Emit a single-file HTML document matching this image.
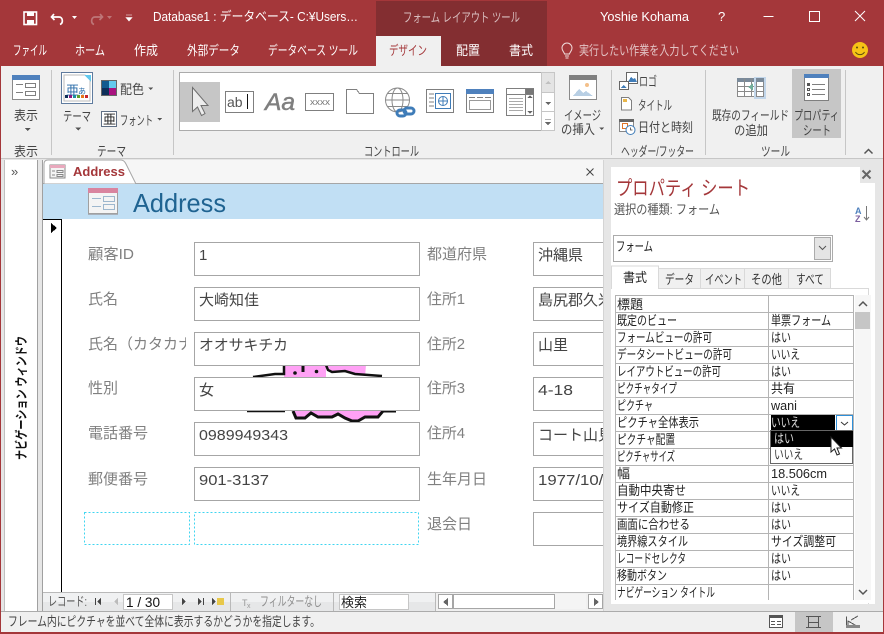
<!DOCTYPE html>
<html lang="ja"><head><meta charset="utf-8"><title>Access</title>
<style>
html,body{margin:0;padding:0;background:#fff}
body{width:884px;height:634px;overflow:hidden}
svg{display:block}
text{font-family:"Liberation Sans","Noto Sans CJK JP",sans-serif;font-size:13px;fill:#444}
.w{fill:#fff}.l{font-size:15px;fill:#808080}.f{font-size:15px;fill:#444}
.g{font-size:13px;fill:#222}
.box{fill:#fff;stroke:#a6a6a6;stroke-width:1}
.ic{fill:none;stroke:#7f7f7f;stroke-width:1}
.ln{stroke:#b4b4b4;stroke-width:1}
</style></head><body>
<svg width="884" height="634" viewBox="0 0 884 634" xmlns="http://www.w3.org/2000/svg" shape-rendering="crispEdges">
<!-- base -->
<rect width="884" height="634" fill="#E6E6E6"/>
<rect width="884" height="66" fill="#A4373A"/>
<rect x="376" y="1" width="171" height="35" fill="#832E31"/>
<rect x="441" y="36" width="106" height="30" fill="#832E31"/>
<rect x="376" y="36" width="65" height="30" fill="#F0F0F0"/>
<rect x="1" y="66" width="882" height="93" fill="#F0F0F0"/>
<rect x="1" y="158" width="882" height="1" fill="#C6C6C6"/>
<rect x="0" y="0" width="1" height="634" fill="#A4373A"/>
<rect x="883" y="0" width="1" height="634" fill="#A4373A"/>
<!-- title bar -->
<g shape-rendering="auto">
<rect x="24" y="12" width="12.500" height="12.500" fill="none" stroke="#fff" stroke-width="1.600"/>
<rect x="27" y="12" width="7" height="4" fill="#fff"/><rect x="27" y="20" width="7" height="4.500" fill="#fff"/>
<path d="M54 14l-2.500 3 3 3M52 17h7c4 0 4.500 6 1 7.500" fill="none" stroke="#fff" stroke-width="1.700"/>
<path d="M72 16l5 0-2.500 3z" fill="#fff"/>
<path d="M100 14l2.500 3-3 3M102 17h-7c-4 0-4.500 6-1 7.500" fill="none" stroke="#BE7678" stroke-width="1.700"/>
<path d="M107 16l5 0-2.500 3z" fill="#BE7678"/>
<path d="M126 15h6M126 17.500l6 0-3 3.500z" fill="#fff" stroke="#fff" stroke-width=".6"/>
<path d="M763.500 16.500h10M809.500 11.500h10v10h-10zM855 11l10 10M865 11l-10 10" fill="none" stroke="#fff" stroke-width="1"/>
</g>
<text class="w" x="153" y="21" textLength="205" lengthAdjust="spacingAndGlyphs">Database1 : データベース- C:¥Users…</text>
<text x="403" y="22" textLength="117" lengthAdjust="spacingAndGlyphs" style="fill:#D8BDBE">フォーム レイアウト ツール</text>
<text class="w" x="600" y="21" textLength="89" lengthAdjust="spacingAndGlyphs">Yoshie Kohama</text>
<text class="w" x="718" y="21">?</text>
<!-- tabs -->
<text class="w" x="13" y="55" textLength="34" lengthAdjust="spacingAndGlyphs">ファイル</text>
<text class="w" x="75" y="55" textLength="30" lengthAdjust="spacingAndGlyphs">ホーム</text>
<text class="w" x="134" y="55" textLength="24" lengthAdjust="spacingAndGlyphs">作成</text>
<text class="w" x="187" y="55" textLength="53" lengthAdjust="spacingAndGlyphs">外部データ</text>
<text class="w" x="268" y="55" textLength="90" lengthAdjust="spacingAndGlyphs">データベース ツール</text>
<text x="389" y="55" textLength="38" lengthAdjust="spacingAndGlyphs" style="fill:#A4373A">デザイン</text>
<text class="w" x="456" y="55" textLength="24" lengthAdjust="spacingAndGlyphs">配置</text>
<text class="w" x="509" y="55" textLength="24" lengthAdjust="spacingAndGlyphs">書式</text>
<text x="579" y="55" textLength="160" lengthAdjust="spacingAndGlyphs" style="fill:#E3C4C5">実行したい作業を入力してください</text>
<g shape-rendering="auto">
<path d="M564.500 54c-.3-2-2.500-3-2.500-6a5 5 0 0 1 10 0c0 3-2.200 4-2.500 6zM565 56h4M565.500 58h3" fill="none" stroke="#F0DCDC" stroke-width="1"/>
<circle cx="860" cy="50" r="8" fill="#F6C416"/>
<circle cx="857" cy="47.500" r="1" fill="#5a4a10"/><circle cx="863" cy="47.500" r="1" fill="#5a4a10"/>
<path d="M855.500 52c2 3.500 7 3.500 9 0" fill="none" stroke="#5a4a10" stroke-width="1"/>
</g>
<!-- ribbon seps -->
<g fill="#C6C6C6"><rect x="51" y="70" width="1" height="85"/><rect x="173" y="70" width="1" height="85"/><rect x="611" y="70" width="1" height="85"/><rect x="705" y="70" width="1" height="85"/><rect x="845" y="70" width="1" height="85"/></g>
<!-- 表示 -->
<rect x="12.500" y="75.500" width="27" height="24" fill="#fff" stroke="#8a8a8a"/>
<rect x="12" y="75" width="28" height="5" fill="#4F81BD"/>
<path d="M16 84.500h7M25.500 83.500h10v4h-10zM16 92.500h7M25.500 91.500h10v4h-10z" class="ic"/>
<text x="14" y="120" textLength="24" lengthAdjust="spacingAndGlyphs">表示</text>
<path d="M24.500 128h6l-3 3z" fill="#555"/>
<text x="14" y="156" textLength="24" lengthAdjust="spacingAndGlyphs">表示</text>
<!-- テーマ -->
<rect x="61.500" y="72.500" width="31" height="31" fill="#fff" stroke="#5F7B9E"/>
<path d="M64 75h21l5 5v21H64z" fill="#fff" stroke="#bbb"/>
<path d="M84 75h7v7z" fill="#63C9EE"/>
<text x="66" y="95" style="font-size:13px;fill:#2A6CA8">亜</text><text x="78" y="94" style="font-size:8px;fill:#2A6CA8">あ</text>
<g><rect x="65" y="95" width="3" height="3" fill="#0E2F5A"/><rect x="69" y="95" width="3" height="3" fill="#8A1A80"/><rect x="73" y="95" width="3" height="3" fill="#1B8FA0"/><rect x="77" y="95" width="3" height="3" fill="#5E9E2E"/><rect x="81" y="95" width="3" height="3" fill="#E8761C"/><rect x="85" y="95" width="3" height="3" fill="#C8262B"/></g>
<text x="63" y="121" textLength="28" lengthAdjust="spacingAndGlyphs">テーマ</text>
<path d="M75 127.500h6l-3 3z" fill="#555"/>
<rect x="101" y="80" width="16" height="16" fill="#666"/>
<rect x="102" y="81" width="7" height="7" fill="#125A8F"/><rect x="109" y="81" width="7" height="7" fill="#63C9EE"/><rect x="102" y="88" width="7" height="7" fill="#0E2F5A"/><rect x="109" y="88" width="7" height="7" fill="#A9127F"/>
<text x="120" y="94" textLength="24" lengthAdjust="spacingAndGlyphs">配色</text>
<path d="M148 87.500h5l-2.500 2.500z" fill="#555"/>
<rect x="101.500" y="111.500" width="15" height="15" fill="#fff" stroke="#5F6F85"/>
<text x="103" y="124" style="font-size:13px;fill:#222">亜</text>
<text x="120" y="125" textLength="33" lengthAdjust="spacingAndGlyphs">フォント</text>
<path d="M157 118h5l-2.500 2.500z" fill="#555"/>
<text x="97" y="156" textLength="29" lengthAdjust="spacingAndGlyphs">テーマ</text>
<!-- gallery -->
<rect x="179.500" y="72.500" width="362" height="58" fill="#fff" stroke="#ABABAB"/>
<rect x="541.500" y="72.500" width="13" height="20" fill="#E4E4E4" stroke="#C6C6C6"/>
<rect x="541.500" y="92.500" width="13" height="19" fill="#fff" stroke="#C6C6C6"/>
<rect x="541.500" y="111.500" width="13" height="19" fill="#fff" stroke="#C6C6C6"/>
<path d="M545 84l3-3 3 3z" fill="#C0C0C0"/><path d="M545 102h6l-3 3z" fill="#666"/><path d="M545 119.500h6M545 122h6l-3 3z" fill="#666" stroke="#666" stroke-width=".5"/>
<rect x="180" y="82" width="40" height="40" fill="#C6C6C6"/>
<path d="M192.500 87.500v24l5-4.500 4 8.500 3.500-2-4-8h7z" fill="#EDEDED" stroke="#6f6f6f" shape-rendering="auto"/>
<rect x="225.500" y="91.500" width="28" height="21" fill="#fff" stroke="#7f7f7f"/>
<text x="227" y="107" style="font-size:14px;fill:#555">ab</text><rect x="247" y="94" width="1" height="15" fill="#111"/>
<text x="265" y="110" style="font-size:24px;font-style:italic;fill:#7f7f7f;stroke:#7f7f7f;stroke-width:.5" textLength="30" lengthAdjust="spacingAndGlyphs">Aa</text>
<rect x="305.500" y="93.500" width="28" height="17" fill="#fff" stroke="#7f7f7f"/>
<text x="310" y="105" style="font-size:9px;fill:#777" textLength="20" lengthAdjust="spacingAndGlyphs">xxxx</text>
<path d="M346.500 113.500v-24h10l3 4h14v20z" fill="#fff" stroke="#7f7f7f"/>
<g shape-rendering="auto" fill="none" stroke="#8a8a8a" stroke-width="1"><circle cx="397.500" cy="100" r="12"/><ellipse cx="397.500" cy="100" rx="5.500" ry="12"/><path d="M385.500 100h24M387.500 93.500h20M387.500 106.500h20"/></g>
<g shape-rendering="auto" fill="none" stroke="#3F7CB8" stroke-width="3"><rect x="397" y="110" width="9" height="6" rx="3"/><rect x="404" y="108" width="10" height="6" rx="3"/></g>
<rect x="426.500" y="89.500" width="27" height="23" fill="#fff" stroke="#7f7f7f"/>
<path d="M429 94h5M429 98h5M429 102h5M429 106h5" class="ic"/><rect x="435.500" y="93.500" width="15" height="15" fill="#fff" stroke="#3F7CB8"/>
<g shape-rendering="auto" fill="none" stroke="#3F7CB8"><circle cx="443" cy="101" r="4.500"/><path d="M438.500 101h9M443 96.500v9"/></g>
<rect x="466.500" y="89.500" width="27" height="23" fill="#fff" stroke="#7f7f7f"/><rect x="466" y="89" width="28" height="5" fill="#4F81BD"/>
<path d="M469 97.500h6M477 97.500h6M485 97.500h6" class="ic"/><rect x="469.500" y="100.500" width="21" height="9" fill="#fff" stroke="#9a9a9a"/>
<rect x="506.500" y="88.500" width="27" height="27" fill="#fff" stroke="#7f7f7f"/>
<path d="M506.500 94.500h27M525.500 88.500v27" class="ic"/><rect x="526" y="89" width="8" height="5" fill="#777"/>
<path d="M509 98.500h14M509 101.500h14M509 104.500h14M509 107.500h14M509 110.500h14" stroke="#aaa" fill="none"/>
<path d="M527.500 98l2.500-3 2.500 3zM527.500 111h5l-2.500 3z" fill="#666"/>
<text x="364" y="156" textLength="55" lengthAdjust="spacingAndGlyphs">コントロール</text>
<!-- image -->
<rect x="569.500" y="75.500" width="27" height="24" fill="#fff" stroke="#8a8a8a"/><rect x="569" y="75" width="28" height="5" fill="#808080"/>
<path d="M573 96l6-7 4 4 3-2 7 5z" fill="#B8CFE4"/><circle cx="587" cy="85" r="2" fill="#F3C08A" shape-rendering="auto"/>
<text x="564" y="120" textLength="37" lengthAdjust="spacingAndGlyphs">イメージ</text>
<text x="561" y="134" textLength="34" lengthAdjust="spacingAndGlyphs">の挿入</text>
<path d="M599 127.500h5l-2.500 2.500z" fill="#555"/>
<!-- header/footer -->
<rect x="626.500" y="72.500" width="11" height="11" fill="#fff" stroke="#666"/><path d="M628 82l3-5 2 2 2-1 2 4z" fill="#3F7CB8"/>
<rect x="619.500" y="81.500" width="9" height="8" fill="#fff" stroke="#666"/><path d="M621 88l2.500-3 3 3z" fill="#3F7CB8"/>
<text x="639" y="86" textLength="18" lengthAdjust="spacingAndGlyphs">ロゴ</text>
<path d="M621.500 97.500h7l3 3v9.500h-10z" fill="#fff" stroke="#7f7f7f"/><rect x="623" y="99" width="4" height="3" fill="#E8B64A"/>
<text x="638" y="110" textLength="34" lengthAdjust="spacingAndGlyphs">タイトル</text>
<rect x="619.500" y="119.500" width="14" height="12" fill="#fff" stroke="#888"/><rect x="619" y="119" width="15" height="3" fill="#666"/><rect x="622.500" y="123.500" width="5" height="5" fill="none" stroke="#E0762C"/>
<g shape-rendering="auto"><circle cx="630.500" cy="130" r="4.500" fill="#fff" stroke="#3F7CB8"/><path d="M630.500 127.500v2.500h2" fill="none" stroke="#444" stroke-width=".8"/></g>
<text x="638" y="132" textLength="55" lengthAdjust="spacingAndGlyphs">日付と時刻</text>
<text x="621" y="156" textLength="73" lengthAdjust="spacingAndGlyphs">ヘッダー/フッター</text>
<!-- tools -->
<rect x="737.500" y="78.500" width="21" height="18" fill="#fff" stroke="#8a8a8a"/><rect x="737" y="78" width="22" height="4" fill="#7a8a9a"/>
<path d="M737.500 86.500h21M737.500 91.500h21M744.500 78.500v18M751.500 78.500v18" stroke="#8a8a8a" fill="none"/>
<rect x="754" y="77" width="12" height="22" fill="#C2D6EA"/><rect x="756.500" y="78.500" width="7" height="18" fill="#fff" stroke="#8a8a8a"/><rect x="756" y="78" width="8" height="4" fill="#7a8a9a"/>
<path d="M756.500 86.500h7M756.500 91.500h7" stroke="#8a8a8a" fill="none"/>
<path d="M753 83.500v7l-5-3.500z" fill="#6FAE9A"/>
<text x="712" y="120" textLength="77" lengthAdjust="spacingAndGlyphs">既存のフィールド</text>
<text x="734" y="135" textLength="34" lengthAdjust="spacingAndGlyphs">の追加</text>
<rect x="792" y="69" width="49" height="69" fill="#C6C6C6"/>
<rect x="804.500" y="74.500" width="24" height="26" fill="#fff" stroke="#7f7f7f"/><rect x="804" y="74" width="25" height="4" fill="#4F81BD"/>
<path d="M812 84.500h13M812 89.500h13M812 94.500h13" class="ic"/><rect x="807" y="83" width="3" height="3" fill="#555"/><rect x="807.500" y="88.500" width="2" height="2" fill="#fff" stroke="#555"/><rect x="807.500" y="93.500" width="2" height="2" fill="#fff" stroke="#555"/>
<text x="794" y="120" textLength="45" lengthAdjust="spacingAndGlyphs">プロパティ</text>
<text x="803" y="135" textLength="28" lengthAdjust="spacingAndGlyphs">シート</text>
<text x="761" y="156" textLength="29" lengthAdjust="spacingAndGlyphs">ツール</text>
<path d="M864.500 153.500l4-4 4 4" fill="none" stroke="#555" stroke-width="1.500" shape-rendering="auto"/>

<!-- workspace: nav pane -->
<rect x="1" y="159" width="3" height="475" fill="#E6E6E6"/>
<rect x="4" y="160" width="34" height="451" fill="#fff"/>
<rect x="4" y="160" width="1" height="451" fill="#C0C0C0"/>
<rect x="37" y="160" width="1" height="451" fill="#A0A0A0"/>
<rect x="38" y="160" width="5" height="451" fill="#E6E6E6"/><rect x="42" y="160" width="1" height="451" fill="#A0A0A0"/>
<text x="11" y="176" style="font-size:13px;fill:#555">»</text>
<text transform="translate(26 460) rotate(-90)" textLength="124" lengthAdjust="spacingAndGlyphs" style="font-size:13px;font-weight:bold;fill:#111">ナビゲーション ウィンドウ</text>
<!-- doc tabs -->
<rect x="43" y="160" width="561" height="24" fill="#F6F6F6"/>
<rect x="43" y="183" width="561" height="1" fill="#A6A6A6"/>
<path d="M44 184v-20q0-4 4-4h73q3 0 5 4l10 20z" fill="#fff" stroke="#A6A6A6" shape-rendering="auto"/>
<rect x="50" y="165" width="15" height="13" fill="#F4F4F4" stroke="#888"/><rect x="50" y="165" width="15" height="3" fill="#E9A9BD"/>
<path d="M52 171h3M57 170.500h6v2h-6zM52 175h3M57 174.500h6v2h-6z" fill="none" stroke="#888" stroke-width=".7"/>
<text x="73" y="176" textLength="52" lengthAdjust="spacingAndGlyphs" style="font-size:13px;font-weight:bold;fill:#A4373A">Address</text>
<path d="M586.500 168.500l7 7M593.500 168.500l-7 7" stroke="#444" fill="none" shape-rendering="auto"/>
<!-- form header -->
<rect x="43" y="184" width="561" height="35" fill="#C1DFF4"/>
<rect x="88" y="189" width="30" height="26" fill="#A8B0BA"/>
<rect x="88.500" y="188.500" width="29" height="25" fill="#F4F4F4" stroke="#A0A0A0"/>
<rect x="88" y="188" width="30" height="5" fill="#D9849F"/>
<path d="M92 198.500h9M92 206.500h9" stroke="#9DB7CE" fill="none"/><rect x="103.500" y="196.500" width="11" height="5" fill="none" stroke="#9DB7CE"/><rect x="103.500" y="204.500" width="11" height="5" fill="none" stroke="#9DB7CE"/>
<text x="133" y="212" textLength="93" lengthAdjust="spacingAndGlyphs" style="font-size:26px;fill:#1F6391">Address</text>
<!-- form body -->
<rect x="43" y="219" width="561" height="373" fill="#fff"/>
<rect x="43" y="219" width="19" height="1" fill="#000"/><rect x="61" y="219" width="1" height="373" fill="#000"/>
<path d="M51 223l6 5-6 5z" fill="#000"/>
<!-- labels -->
<text class="l" x="88" y="259" textLength="46" lengthAdjust="spacingAndGlyphs">顧客ID</text>
<text class="l" x="88" y="304">氏名</text>
<text class="l" x="88" y="349">氏名（カタカナ</text>
<rect x="186" y="334" width="8" height="20" fill="#fff"/>
<text class="l" x="88" y="393">性別</text>
<text class="l" x="88" y="438">電話番号</text>
<text class="l" x="88" y="484">郵便番号</text>
<text class="l" x="427" y="259">都道府県</text>
<text class="l" x="427" y="304" textLength="38" lengthAdjust="spacingAndGlyphs">住所1</text>
<text class="l" x="427" y="349" textLength="38" lengthAdjust="spacingAndGlyphs">住所2</text>
<text class="l" x="427" y="393" textLength="38" lengthAdjust="spacingAndGlyphs">住所3</text>
<text class="l" x="427" y="438" textLength="38" lengthAdjust="spacingAndGlyphs">住所4</text>
<text class="l" x="427" y="484">生年月日</text>
<text class="l" x="427" y="529">退会日</text>
<!-- picture pieces -->
<g shape-rendering="auto">
<path d="M284 365h82l-1 12h-81z" fill="#FFA1F5"/>
<path d="M326 365v12h56v-1l-27-2-10-3-13 1-6-7z" fill="#fff"/>
<path d="M253 377l22-3h9v-9" fill="none" stroke="#111" stroke-width="2.500"/>
<path d="M326 365l2 5 4 2 13-1 10 3 27 2" fill="none" stroke="#111" stroke-width="2.500"/>
<path d="M303 366v6" stroke="#111" stroke-width="3"/>
<circle cx="295" cy="373" r="1.800" fill="#111"/><circle cx="316.500" cy="371.500" r="1.800" fill="#111"/>
<path d="M294 410h89l-5 7h-13l-7 4h-6l-7-3-7-4-6 4h-14l-7-5-6 5h-9z" fill="#FFA1F5"/>
<path d="M293 411l3 7h9l6-5 7 4h14l6-3 7 4 7 3h6l7-4h13l5-6h13" fill="none" stroke="#111" stroke-width="3"/>
<path d="M247 411.500h38" stroke="#111" stroke-width="1.500"/>
</g>
<!-- fields -->
<rect class="box" x="194.500" y="242.500" width="225" height="33"/>
<rect class="box" x="194.500" y="287.500" width="225" height="33"/>
<path class="ln" style="stroke:#a6a6a6" d="M194.500 332.500h225v33h-225zM194.500 377.500h225v33h-225z" fill="none"/>
<rect class="box" x="194.500" y="422.500" width="225" height="33"/>
<rect class="box" x="194.500" y="467.500" width="225" height="33"/>
<rect class="box" x="533.500" y="242.500" width="90" height="33"/>
<rect class="box" x="533.500" y="287.500" width="90" height="33"/>
<rect class="box" x="533.500" y="332.500" width="90" height="33"/>
<rect class="box" x="533.500" y="377.500" width="90" height="33"/>
<rect class="box" x="533.500" y="422.500" width="90" height="33"/>
<rect class="box" x="533.500" y="467.500" width="90" height="33"/>
<rect class="box" x="533.500" y="512.500" width="90" height="33"/>
<rect x="195" y="333" width="224" height="32" fill="#fff"/>
<rect x="195" y="378" width="224" height="32" fill="#fff"/>
<path d="M84.500 512.500h105v32h-105zM194.500 512.500h224v32h-224z" fill="none" stroke="#3FD5F0" stroke-dasharray="2 2"/>
<text class="f" x="199" y="260">1</text>
<text class="f" x="199" y="305" textLength="60" lengthAdjust="spacingAndGlyphs">大崎知佳</text>
<text class="f" x="199" y="350" textLength="89" lengthAdjust="spacingAndGlyphs">オオサキチカ</text>
<text class="f" x="199" y="395">女</text>
<text class="f" x="199" y="440" textLength="89" lengthAdjust="spacingAndGlyphs">0989949343</text>
<text class="f" x="199" y="485" textLength="70" lengthAdjust="spacingAndGlyphs">901-3137</text>
<text class="f" x="538" y="260">沖縄県</text>
<text class="f" x="538" y="305">島尻郡久米島町</text>
<text class="f" x="538" y="350">山里</text>
<text class="f" x="538" y="395" textLength="35" lengthAdjust="spacingAndGlyphs">4-18</text>
<text class="f" x="538" y="440">コート山見荘</text>
<text class="f" x="538" y="485" textLength="84" lengthAdjust="spacingAndGlyphs">1977/10/17</text>
<!-- record bar -->
<rect x="43" y="592" width="561" height="19" fill="#F0F1F2"/>
<rect x="43" y="602" width="392" height="9" fill="#E6E7E8"/>
<rect x="435" y="593" width="169" height="18" fill="#F0F0F0"/>
<rect x="43" y="592" width="561" height="1" fill="#B9B9B9"/>
<rect x="230" y="593" width="1" height="18" fill="#B9B9B9"/><rect x="333" y="593" width="1" height="18" fill="#B9B9B9"/><rect x="435" y="593" width="1" height="18" fill="#B9B9B9"/>
<text x="48" y="606" textLength="39" lengthAdjust="spacingAndGlyphs" style="fill:#555">レコード:</text>
<path d="M95 598h1v7h-1zM101 598v7l-4-3.500z" fill="#444"/>
<path d="M118 598v7l-4-3.500z" fill="#BBB"/>
<rect x="123.500" y="594.500" width="49" height="15" fill="#fff" stroke="#C6C6C6"/>
<text x="126" y="607" textLength="34" lengthAdjust="spacingAndGlyphs" style="font-size:14px;fill:#111">1 / 30</text>
<path d="M182 598v7l4-3.500z" fill="#444"/>
<path d="M198 598v7l4-3.500zM203 598h1v7h-1z" fill="#444"/>
<path d="M212 598v7l4-3.500z" fill="#444"/><rect x="217" y="598" width="7" height="7" fill="#E8C84A"/>
<text x="242" y="606" style="font-size:9px;fill:#999">T</text><text x="247" y="608" style="font-size:7px;fill:#999">x</text>
<text x="260" y="606" textLength="62" lengthAdjust="spacingAndGlyphs" style="fill:#8f8f8f">フィルターなし</text>
<rect x="339.500" y="594.500" width="69" height="15" fill="#fff" stroke="#C6C6C6"/>
<text x="341" y="607" style="fill:#222">検索</text>
<rect x="438.500" y="594.500" width="14" height="14" fill="#fff" stroke="#A6A6A6"/><path d="M448 598v8l-5-4z" fill="#666"/>
<rect x="453.500" y="594.500" width="101" height="14" fill="#fff" stroke="#A6A6A6"/>
<rect x="555" y="594" width="31" height="15" fill="#F4F4F4"/>
<rect x="588.500" y="594.500" width="14" height="14" fill="#fff" stroke="#A6A6A6"/><path d="M594 598v8l5-4z" fill="#666"/>
<!-- right pane -->
<rect x="603" y="160" width="280" height="451" fill="#E6E6E6"/>
<rect x="603" y="160" width="1" height="451" fill="#D4D4D4"/>
<rect x="611" y="167" width="264" height="437" fill="#fff"/>
<rect x="860" y="167" width="15" height="16" fill="#E6E6E6"/>
<path d="M862.500 170.500l8 8M870.500 170.500l-8 8" stroke="#666" stroke-width="2" fill="none" shape-rendering="auto"/>
<text x="616" y="195" textLength="134" lengthAdjust="spacingAndGlyphs" style="font-size:20px;fill:#A4373A">プロパティ シート</text>
<text x="614" y="214" textLength="106" lengthAdjust="spacingAndGlyphs" style="fill:#555">選択の種類: フォーム</text>
<text x="855" y="214" style="font-size:9px;font-weight:bold;fill:#4F81BD">A</text><text x="855" y="222" style="font-size:9px;font-weight:bold;fill:#7B5E9E">Z</text>
<path d="M866.500 206v14M864 217l2.500 3 2.500-3" stroke="#777" fill="none" shape-rendering="auto"/>
<rect x="613.500" y="235.500" width="219" height="26" fill="#fff" stroke="#ABABAB"/>
<text x="616" y="251" textLength="37" lengthAdjust="spacingAndGlyphs" style="fill:#222">フォーム</text>
<rect x="814.500" y="237.500" width="16" height="22" fill="#E4E4E4" stroke="#ABABAB"/>
<path d="M819 246l3.500 3.500 3.500-3.500" stroke="#555" fill="none" shape-rendering="auto"/>
<!-- prop tabs -->
<rect x="658" y="268" width="173" height="21" fill="#F0F0F0"/>
<path d="M700.500 268v21M744.500 268v21M788.500 268v21M830.500 268v21M658 268.500h173" stroke="#D9D9D9" fill="none"/>
<rect x="611" y="288" width="257" height="1" fill="#D9D9D9"/>
<rect x="868" y="288" width="1" height="316" fill="#D9D9D9"/>
<path d="M611.500 289v-23h47v23" fill="#fff" stroke="#D9D9D9"/>
<rect x="612" y="288" width="46" height="2" fill="#fff"/>
<text x="623" y="282" style="fill:#222" textLength="24" lengthAdjust="spacingAndGlyphs">書式</text>
<text x="665" y="284" style="fill:#333" textLength="29" lengthAdjust="spacingAndGlyphs">データ</text>
<text x="705" y="284" style="fill:#333" textLength="37" lengthAdjust="spacingAndGlyphs">イベント</text>
<text x="751" y="284" style="fill:#333" textLength="31" lengthAdjust="spacingAndGlyphs">その他</text>
<text x="796" y="284" style="fill:#333" textLength="28" lengthAdjust="spacingAndGlyphs">すべて</text>
<!-- grid -->
<g class="ln" fill="none">
<path d="M615.500 295v305M768.500 295v305M853.500 295v305"/>
<path d="M615 295.500h239M615 312.500h239M615 329.500h239M615 346.500h239M615 363.500h239M615 380.500h239M615 397.500h239M615 414.500h239M615 431.500h239M615 448.500h239M615 465.500h239M615 482.500h239M615 499.500h239M615 516.500h239M615 533.500h239M615 550.500h239M615 567.500h239M615 584.500h239"/>
</g>
<text class="g" x="617" y="309">標題</text>
<text class="g" x="617" y="325" textLength="60" lengthAdjust="spacingAndGlyphs">既定のビュー</text>
<text class="g" x="617" y="342" textLength="95" lengthAdjust="spacingAndGlyphs">フォームビューの許可</text>
<text class="g" x="617" y="359" textLength="115" lengthAdjust="spacingAndGlyphs">データシートビューの許可</text>
<text class="g" x="617" y="376" textLength="104" lengthAdjust="spacingAndGlyphs">レイアウトビューの許可</text>
<text class="g" x="617" y="393" textLength="60" lengthAdjust="spacingAndGlyphs">ピクチャタイプ</text>
<text class="g" x="617" y="410" textLength="36" lengthAdjust="spacingAndGlyphs">ピクチャ</text>
<text class="g" x="617" y="427" textLength="82" lengthAdjust="spacingAndGlyphs">ピクチャ全体表示</text>
<text class="g" x="617" y="444" textLength="58" lengthAdjust="spacingAndGlyphs">ピクチャ配置</text>
<text class="g" x="617" y="461" textLength="58" lengthAdjust="spacingAndGlyphs">ピクチャサイズ</text>
<text class="g" x="617" y="478">幅</text>
<text class="g" x="617" y="495" textLength="69" lengthAdjust="spacingAndGlyphs">自動中央寄せ</text>
<text class="g" x="617" y="512" textLength="77" lengthAdjust="spacingAndGlyphs">サイズ自動修正</text>
<text class="g" x="617" y="529" textLength="73" lengthAdjust="spacingAndGlyphs">画面に合わせる</text>
<text class="g" x="617" y="546" textLength="71" lengthAdjust="spacingAndGlyphs">境界線スタイル</text>
<text class="g" x="617" y="563" textLength="69" lengthAdjust="spacingAndGlyphs">レコードセレクタ</text>
<text class="g" x="617" y="580" textLength="50" lengthAdjust="spacingAndGlyphs">移動ボタン</text>
<text class="g" x="617" y="597" textLength="98" lengthAdjust="spacingAndGlyphs">ナビゲーション タイトル</text>
<text class="g" x="771" y="325" textLength="60" lengthAdjust="spacingAndGlyphs">単票フォーム</text>
<text class="g" x="771" y="342" textLength="20" lengthAdjust="spacingAndGlyphs">はい</text>
<text class="g" x="771" y="359" textLength="29" lengthAdjust="spacingAndGlyphs">いいえ</text>
<text class="g" x="771" y="376" textLength="20" lengthAdjust="spacingAndGlyphs">はい</text>
<text class="g" x="771" y="393" textLength="24" lengthAdjust="spacingAndGlyphs">共有</text>
<text class="g" x="771" y="410" textLength="26" lengthAdjust="spacingAndGlyphs">wani</text>
<text class="g" x="771" y="478" textLength="56" lengthAdjust="spacingAndGlyphs">18.506cm</text>
<text class="g" x="771" y="495" textLength="29" lengthAdjust="spacingAndGlyphs">いいえ</text>
<text class="g" x="771" y="512" textLength="20" lengthAdjust="spacingAndGlyphs">はい</text>
<text class="g" x="771" y="529" textLength="20" lengthAdjust="spacingAndGlyphs">はい</text>
<text class="g" x="771" y="546" textLength="65" lengthAdjust="spacingAndGlyphs">サイズ調整可</text>
<text class="g" x="771" y="563" textLength="20" lengthAdjust="spacingAndGlyphs">はい</text>
<text class="g" x="771" y="580" textLength="20" lengthAdjust="spacingAndGlyphs">はい</text>
<!-- selected cell + dropdown -->
<rect x="771" y="415" width="64" height="16" fill="#000"/>
<text x="771" y="427" textLength="29" lengthAdjust="spacingAndGlyphs" style="fill:#ddd">いいえ</text>
<rect x="836.500" y="415.500" width="16" height="15" fill="#fff" stroke="#2E8FD8"/>
<path d="M841 422l3.500 3 3.500-3" stroke="#333" fill="none" shape-rendering="auto"/>
<rect x="770.500" y="430.500" width="82" height="33" fill="#fff" stroke="#666"/>
<rect x="771" y="431" width="82" height="16" fill="#000"/>
<text x="774" y="443" textLength="20" lengthAdjust="spacingAndGlyphs" style="fill:#ddd">はい</text>
<text x="774" y="459" textLength="29" lengthAdjust="spacingAndGlyphs" style="fill:#333">いいえ</text>
<path d="M831 437v15l3.500-3 2.500 6 2.500-1-2.500-6h4.500z" fill="#fff" stroke="#222" shape-rendering="auto"/>
<!-- v scrollbar -->
<rect x="855" y="295" width="16" height="305" fill="#F6F6F6"/>
<path d="M859 306l4-4 4 4" stroke="#555" stroke-width="1.500" fill="none" shape-rendering="auto"/>
<rect x="855" y="312" width="15" height="17" fill="#C6C6C6"/>
<path d="M859 590l4 4 4-4" stroke="#555" stroke-width="1.500" fill="none" shape-rendering="auto"/>
<!-- bottom pane bg -->
<rect x="611" y="600" width="258" height="3" fill="#fff"/>
<!-- status bar -->
<rect x="1" y="611" width="882" height="21" fill="#F0F0F0"/>
<rect x="1" y="611" width="882" height="1" fill="#ABABAB"/>
<rect x="0" y="632" width="884" height="2" fill="#A4373A"/>
<text x="8" y="626" textLength="312" lengthAdjust="spacingAndGlyphs" style="fill:#444">フレーム内にピクチャを並べて全体に表示するかどうかを指定します。</text>
<rect x="795" y="612" width="38" height="20" fill="#C6C6C6"/>
<rect x="769.500" y="615.500" width="13" height="12" fill="#fff" stroke="#555"/><rect x="769" y="615" width="14" height="3" fill="#555"/>
<path d="M771 621.500h4M777 621.500h4M771 624.500h4M777 624.500h4" stroke="#555" fill="none"/>
<rect x="808.500" y="616.500" width="10" height="11" fill="none" stroke="#555"/>
<path d="M806 616.500h15M806 627.500h15M808 622.500h11" stroke="#555" fill="none"/>
<path d="M846.500 616.500v11h13M848 627v-6l7 4zM851 620l7-4" stroke="#555" fill="none"/>
<rect x="846" y="625" width="14" height="3" fill="#888"/>
</svg>
</body></html>
